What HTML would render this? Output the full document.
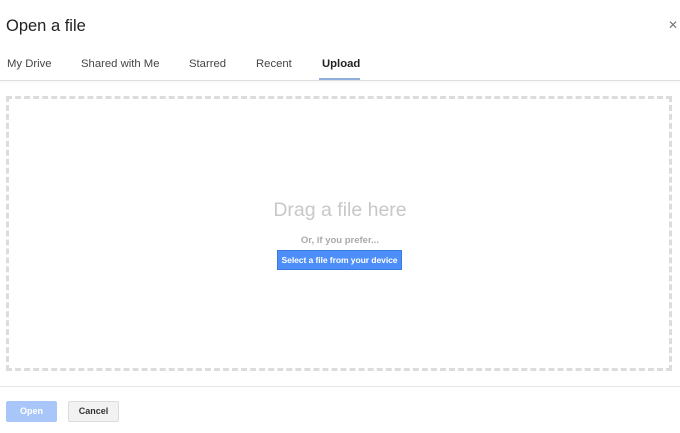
<!DOCTYPE html>
<html><head><style>
body{margin:0;width:680px;height:433px;background:#fff;font-family:"Liberation Sans",Arial,sans-serif;position:relative;overflow:hidden}
.t{position:absolute;left:6px;top:17px;font-size:16.5px;color:#222}
.x{position:absolute;left:668px;top:18px;font-size:12px;color:#777}
.tab{position:absolute;top:58px;font-size:11.3px;color:#444;white-space:nowrap}
.bar{position:absolute;left:0;top:80px;width:680px;height:1px;background:#e0e0e0;box-shadow:0 1px 2px rgba(0,0,0,.08)}
.ul{position:absolute;left:319px;top:78px;width:41px;height:2px;background:#8fb0dc}
.box{position:absolute;left:6px;top:96px;width:660px;height:269px;border:3px dashed #dcdcdc}
.drag{position:absolute;left:0;width:680px;text-align:center;top:199px;font-size:19.5px;color:#c8c8c8}
.or{position:absolute;left:0;width:680px;text-align:center;top:235px;font-size:9.5px;font-weight:bold;color:#aaa}
.sel{position:absolute;left:277px;top:250px;width:125px;height:20px;background:#4d8ef8;border:1px solid #3b7ae0;box-sizing:border-box;color:#fff;font-size:8.6px;font-weight:bold;text-align:center;line-height:19px;white-space:nowrap;letter-spacing:-0.1px}
.fl{position:absolute;left:0;top:386px;width:680px;height:1px;background:#e5e5e5}
.b{position:absolute;top:401px;width:51px;height:21px;box-sizing:border-box;font-size:9px;font-weight:bold;text-align:center;line-height:21px;border-radius:2px}
</style></head><body>
<div class="t">Open a file</div>
<div class="x">✕</div>
<div class="tab" style="left:7px">My Drive</div>
<div class="tab" style="left:81px">Shared with Me</div>
<div class="tab" style="left:189px">Starred</div>
<div class="tab" style="left:256px">Recent</div>
<div class="tab" style="left:322px;font-weight:bold;color:#222">Upload</div>
<div class="bar"></div><div class="ul"></div>
<div class="box"></div>
<div class="drag">Drag a file here</div>
<div class="or">Or, if you prefer...</div>
<div class="sel">Select a file from your device</div>
<div class="fl"></div>
<div class="b" style="left:6px;background:#a9c6fb;color:#fff">Open</div>
<div class="b" style="left:68px;background:#f2f2f2;border:1px solid #dcdcdc;color:#333;line-height:19px">Cancel</div>
</body></html>
